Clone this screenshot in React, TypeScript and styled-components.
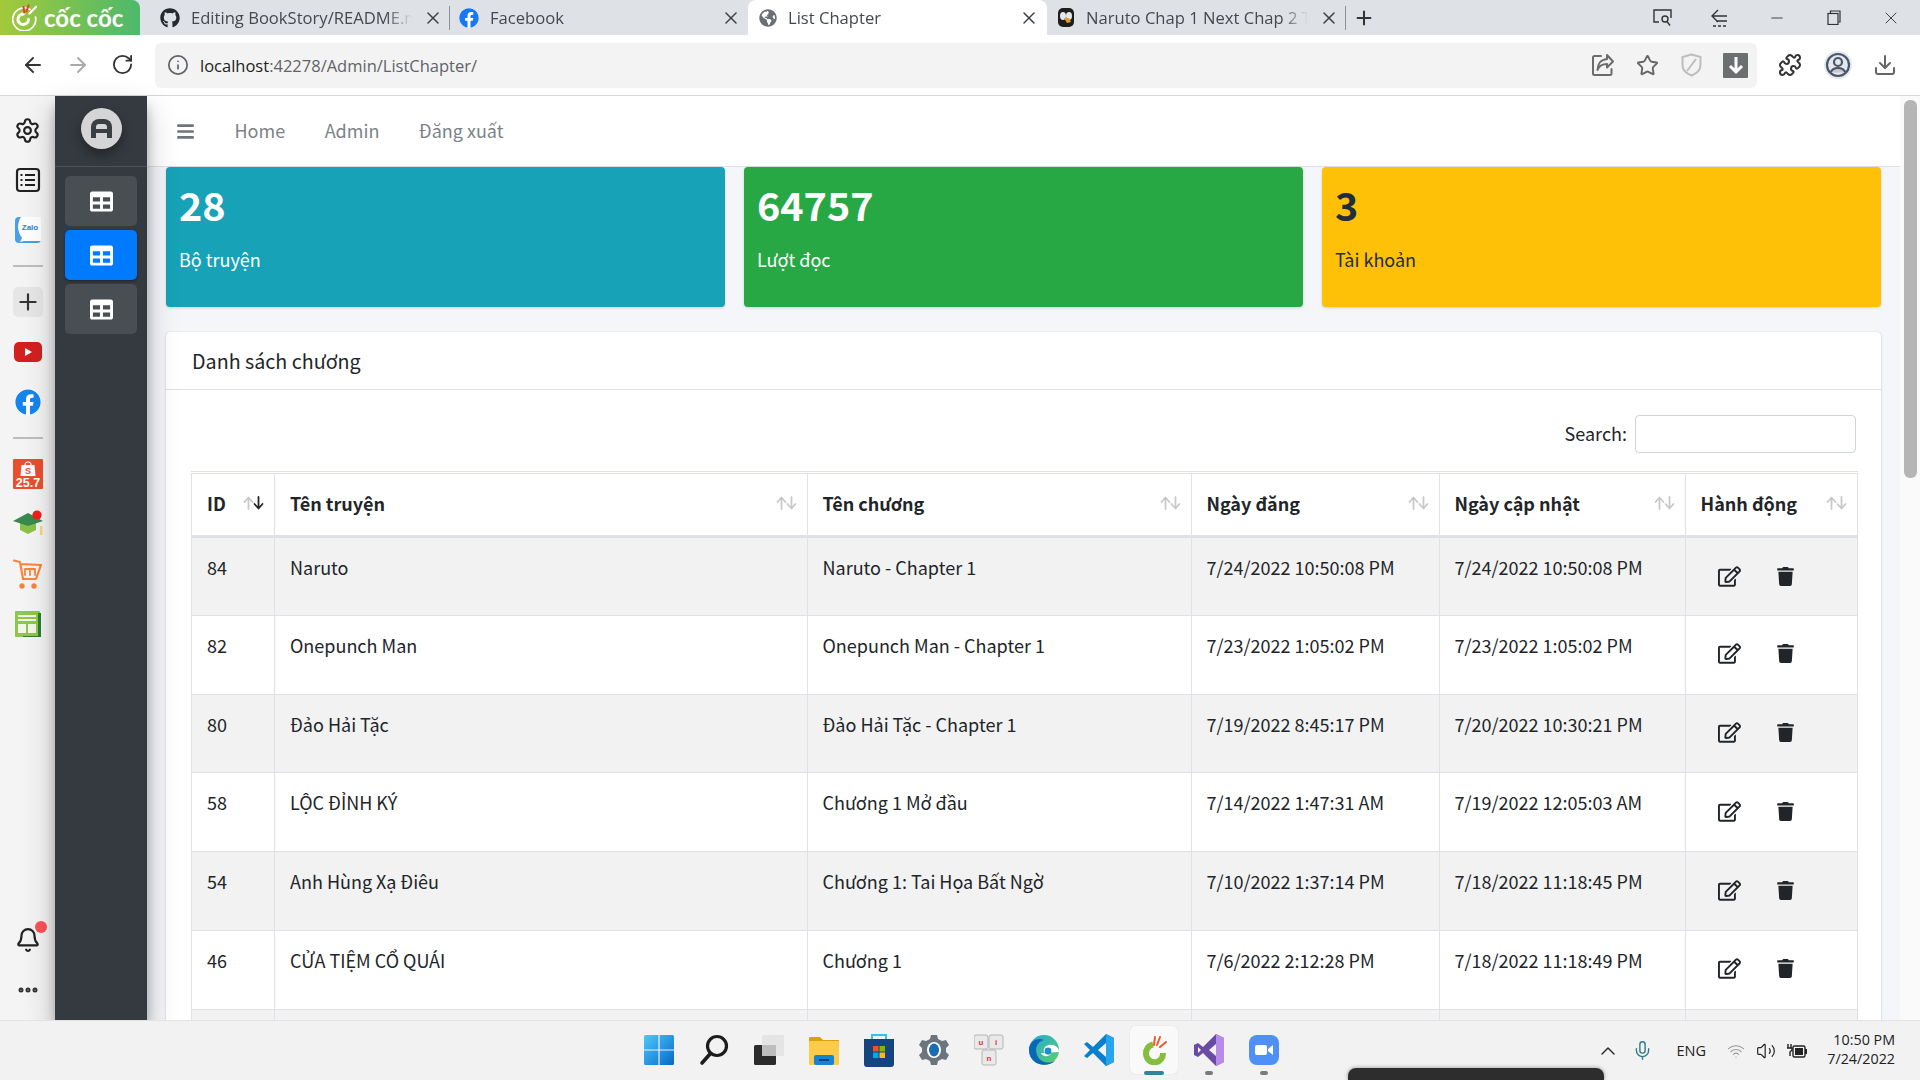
import React from "react";
import styled, { createGlobalStyle } from "styled-components";
import { FaBars, FaFacebook, FaGithub, FaGlobeAmericas, FaRegEdit, FaTable, FaTrash } from "react-icons/fa";
import { ArrowLeft, ArrowRight, Bell, ChevronUp, Download, Info, Mic, Minus, MoreHorizontal, Plus, Puzzle, RotateCw, Settings, Star, Volume2, Wifi, X } from "lucide-react";

const FONT = `"Noto Sans CJK SC", "Noto Sans", sans-serif`;
const CHROME_FONT = `"Open Sans", "Noto Sans", sans-serif`;

const GlobalStyle = createGlobalStyle`
  html, body { margin: 0; padding: 0; height: 100%; overflow: hidden; }
  body { font-family: ${FONT}; color: #212529; background: #fff; }
  * { box-sizing: border-box; }
`;

const rows = [
  { id: 84, story: "Naruto", chapter: "Naruto - Chapter 1", created: "7/24/2022 10:50:08 PM", updated: "7/24/2022 10:50:08 PM" },
  { id: 82, story: "Onepunch Man", chapter: "Onepunch Man - Chapter 1", created: "7/23/2022 1:05:02 PM", updated: "7/23/2022 1:05:02 PM" },
  { id: 80, story: "Đảo Hải Tặc", chapter: "Đảo Hải Tặc - Chapter 1", created: "7/19/2022 8:45:17 PM", updated: "7/20/2022 10:30:21 PM" },
  { id: 58, story: "LỘC ĐỈNH KÝ", chapter: "Chương 1 Mở đầu", created: "7/14/2022 1:47:31 AM", updated: "7/19/2022 12:05:03 AM" },
  { id: 54, story: "Anh Hùng Xạ Điêu", chapter: "Chương 1: Tai Họa Bất Ngờ", created: "7/10/2022 1:37:14 PM", updated: "7/18/2022 11:18:45 PM" },
  { id: 46, story: "CỬA TIỆM CỔ QUÁI", chapter: "Chương 1", created: "7/6/2022 2:12:28 PM", updated: "7/18/2022 11:18:49 PM" },
];

const columns = [
  { label: "ID", width: 83, active: true },
  { label: "Tên truyện", width: 532.5 },
  { label: "Tên chương", width: 384 },
  { label: "Ngày đăng", width: 248 },
  { label: "Ngày cập nhật", width: 246 },
  { label: "Hành động", width: 172 },
];

const stats = [
  { value: "28", label: "Bộ truyện", bg: "#17a2b8", fg: "#fff" },
  { value: "64757", label: "Lượt đọc", bg: "#28a745", fg: "#fff" },
  { value: "3", label: "Tài khoản", bg: "#ffc107", fg: "#1f2d3d" },
];

const SortIcon = ({ active }: { active?: boolean }) => (
  <svg width="21" height="14" viewBox="0 0 21 14" fill="none" strokeWidth="1.8" strokeLinecap="round" strokeLinejoin="round">
    <path d="M5.5 13V2M1.5 6l4-4.5 4 4.5" stroke="#c9c9c9" />
    <path d="M15.5 1v11M11.5 8l4 4.5 4-4.5" stroke={active ? "#212529" : "#c9c9c9"} />
  </svg>
);

const CocCocMark = () => (
  <svg width="29" height="27" viewBox="0 0 29 27" fill="none" strokeLinecap="round">
    <path d="M20 5.5A11.5 11.5 0 1 0 25.5 13" stroke="#fff" strokeWidth="1.7" />
    <path d="M13.5 10A5.3 5.3 0 1 0 18.5 15.5" stroke="#fff" strokeWidth="3" />
    <path d="M13.5 3l.8 5.5M18.5 1.5l-2 6" stroke="#ea3f2c" strokeWidth="2" />
    <path d="M26 3l-6.5 6.5" stroke="#fff" strokeWidth="2.2" />
  </svg>
);

const ListGlyph = () => (
  <svg width="26" height="26" viewBox="0 0 26 26" fill="none" stroke="#222" strokeWidth="2">
    <rect x="2" y="2" width="22" height="22" rx="3" strokeWidth="2.2" />
    <path d="M10 8h10M10 13h10M10 18h10" />
    <path d="M5.5 8h2M5.5 13h2M5.5 18h2" />
  </svg>
);

const ZaloGlyph = () => (
  <svg width="28" height="28" viewBox="0 0 28 28">
    <rect x="1" y="1" width="26" height="26" rx="4" fill="#4a9ee6" />
    <path d="M7 1h20v24H10l-4 1 2-4C3 15 3 7 7 1z" fill="#fff" />
    <text x="16" y="14" fontSize="8" fontWeight="700" fill="#2f7fd6" textAnchor="middle" fontFamily="Liberation Sans, sans-serif">Zalo</text>
  </svg>
);

const YoutubeGlyph = () => (
  <svg width="28" height="20" viewBox="0 0 28 20">
    <rect width="28" height="20" rx="5" fill="#d3201f" />
    <path d="M11 6l7 4-7 4z" fill="#fff" />
  </svg>
);

const FacebookGlyph = () => (
  <FacebookWrap>
    <FaFacebook size={26} color="#1485ee" />
  </FacebookWrap>
);

const ShopeeGlyph = () => (
  <svg width="30" height="30" viewBox="0 0 30 30">
    <rect width="30" height="30" rx="1" fill="#ea4f2d" />
    <path d="M8.5 6h13l1 11h-15z" fill="#fff" />
    <path d="M12 6a3 3 0 0 1 6 0" stroke="#fff" fill="none" strokeWidth="1.2" />
    <text x="15" y="15" fontSize="9" fontWeight="700" fill="#ea4f2d" textAnchor="middle" fontFamily="Liberation Sans, sans-serif">S</text>
    <text x="15" y="28" fontSize="12.5" fontWeight="700" fill="#fff" textAnchor="middle" fontFamily="Liberation Sans, sans-serif">25.7</text>
  </svg>
);

const CapGlyph = () => (
  <svg width="30" height="28" viewBox="0 0 30 28">
    <path d="M7 12h16v8l-8 4-8-4z" fill="#8ac249" />
    <path d="M0 11L15 3l15 8-15 5z" fill="#3a8a4e" />
    <rect x="27" y="16" width="2.4" height="9" fill="#f7d77a" />
    <circle cx="24" cy="5" r="4.6" fill="#f01c1c" />
  </svg>
);

const CartGlyph = () => (
  <svg width="30" height="30" viewBox="0 0 30 30" fill="none" stroke="#f9843f" strokeWidth="2.2" strokeLinecap="round" strokeLinejoin="round">
    <path d="M1 1.5l6 1.5 3 17h13l5-14-20-1" />
    <path d="M12 16v-6M17 16v-6M22 16v-6M12 10h10" strokeWidth="1.8" />
    <circle cx="9" cy="27" r="1.6" fill="#f9843f" />
    <circle cx="21" cy="27" r="1.6" fill="#f9843f" />
  </svg>
);

const SheetGlyph = () => (
  <svg width="26" height="26" viewBox="0 0 26 26">
    <rect x="0" y="0" width="25" height="26" rx="1" fill="#8cc84b" />
    <path d="M23 2h3v24H8v-1h15z" fill="#2e7d32" />
    <path d="M3 4h18v2H3zM3 8h18v2H3zM3 13h8v9H3zM13 13h8v9h-8z" fill="#f2f7e9" />
  </svg>
);

const ShareGlyph = () => (
  <svg width="24" height="24" viewBox="0 0 24 24" fill="none" stroke="#6b6b6b" strokeWidth="2" strokeLinejoin="round" strokeLinecap="round">
    <path d="M10 3H3.5A1.5 1.5 0 0 0 2 4.5V20.5A1.5 1.5 0 0 0 3.5 22H19a1.5 1.5 0 0 0 1.5-1.5V16" />
    <path d="M16 2l6 6.5-6 6V11C11 11 8 13 6.5 17 6.5 11 10 6.5 16 6z" />
  </svg>
);

const ShieldGlyph = () => (
  <svg width="21" height="24" viewBox="0 0 21 24" fill="none" stroke="#bdbdbd" strokeWidth="2" strokeLinejoin="round">
    <path d="M10.5 1.5L19.5 4v8c0 5-4 8.5-9 10.5-5-2-9-5.500-9-10.500V4z" />
    <path d="M15 6L6 18" />
  </svg>
);

const ProfileGlyph = () => (
  <svg width="28" height="28" viewBox="0 0 28 28" fill="none">
    <circle cx="14" cy="14" r="14" fill="#e3e7ee" />
    <circle cx="14" cy="14" r="11" stroke="#4a5568" strokeWidth="2.2" />
    <circle cx="14" cy="11" r="4" stroke="#4a5568" strokeWidth="2.2" />
    <path d="M6.5 21.5C8 18 11 17 14 17s6 1 7.5 4.5" fill="#c5cad3" stroke="#4a5568" strokeWidth="2.2" />
  </svg>
);

const WindowsGlyph = () => (
  <svg width="30" height="30" viewBox="0 0 30 30">
    <defs>
      <linearGradient id="winblue" x1="0" y1="0" x2="1" y2="1">
        <stop offset="0" stopColor="#4fc8fb" />
        <stop offset="1" stopColor="#0668c9" />
      </linearGradient>
    </defs>
    <path d="M0 1.5A1.5 1.5 0 0 1 1.5 0H14.4v14.4H0zM15.6 0h12.9A1.5 1.5 0 0 1 30 1.5v12.9H15.6zM0 15.6h14.4V30H1.5A1.5 1.5 0 0 1 0 28.5zM15.6 15.6H30v12.9a1.5 1.5 0 0 1-1.5 1.5H15.6z" fill="url(#winblue)" />
  </svg>
);

const SearchGlyph = () => (
  <svg width="30" height="32" viewBox="0 0 30 32" fill="none" stroke="#1c1c1c" strokeLinecap="round">
    <circle cx="18" cy="12" r="9.5" strokeWidth="3.2" />
    <path d="M11 20L3 29" strokeWidth="3.6" />
  </svg>
);

const TaskViewGlyph = () => (
  <svg width="30" height="30" viewBox="0 0 30 30">
    <rect x="0" y="10" width="22" height="20" rx="1.5" fill="#2b2b2b" />
    <rect x="8" y="0" width="22" height="21" rx="1.5" fill="#e4e4e4" />
    <rect x="8" y="10" width="14" height="11" fill="#bdbdbd" />
  </svg>
);

const FolderGlyph = () => (
  <svg width="30" height="30" viewBox="0 0 30 30">
    <path d="M0 3a1 1 0 0 1 1-1h10l3 3h16v4H0z" fill="#dca104" />
    <rect x="0" y="6" width="30" height="24" rx="1" fill="#fbcb4a" />
    <rect x="5" y="20" width="20" height="10" rx="2" fill="#1583d4" />
    <rect x="10" y="24" width="10" height="2" fill="#083f73" />
  </svg>
);

const StoreGlyph = () => (
  <svg width="30" height="34" viewBox="0 0 30 34">
    <path d="M8 6V2h14v4" stroke="#35c1f1" strokeWidth="2" fill="none" />
    <path d="M0 6h30v25a3 3 0 0 1-3 3H3a3 3 0 0 1-3-3z" fill="#14457f" />
    <rect x="9" y="13" width="5.5" height="5.5" fill="#f25022" />
    <rect x="15.5" y="13" width="5.5" height="5.5" fill="#7fba00" />
    <rect x="9" y="19.5" width="5.5" height="5.5" fill="#00a4ef" />
    <rect x="15.5" y="19.5" width="5.5" height="5.5" fill="#ffb900" />
  </svg>
);

const GearGlyph = () => (
  <svg width="32" height="32" viewBox="0 0 32 32">
    <path d="M13 1h6l1 4 4 2 4-1 3 5-3 3v4l3 3-3 5-4-1-4 2-1 4h-6l-1-4-4-2-4 1-3-5 3-3v-4L1 11l3-5 4 1 4-2z" fill="#6c757d" />
    <ellipse cx="16" cy="16" rx="7" ry="8" fill="#fff" />
    <ellipse cx="16" cy="16" rx="5" ry="6.5" fill="#1a6db3" />
  </svg>
);

const UnikeyGlyph = () => (
  <svg width="30" height="32" viewBox="0 0 30 32" fontFamily="Liberation Sans, sans-serif" fontSize="8" fontWeight="700" textAnchor="middle">
    <rect x="0" y="1" width="14" height="14" rx="2" fill="#e9e9e9" stroke="#b5b5b5" />
    <rect x="15" y="1" width="14" height="14" rx="2" fill="#e9e9e9" stroke="#b5b5b5" />
    <rect x="8" y="16" width="14" height="15" rx="2" fill="#e9e9e9" stroke="#b5b5b5" />
    <text x="7" y="11" fill="#e0363a">u</text>
    <text x="22" y="11" fill="#e0363a">i</text>
    <text x="15" y="27" fill="#e0363a">n</text>
  </svg>
);

const EdgeGlyph = () => (
  <svg width="30" height="32" viewBox="0 0 30 32">
    <defs>
      <linearGradient id="edgegreen" x1="0" y1="0" x2="1" y2="1">
        <stop offset="0" stopColor="#1ea8d8" />
        <stop offset="1" stopColor="#5fd068" />
      </linearGradient>
    </defs>
    <circle cx="15" cy="16" r="15" fill="url(#edgegreen)" />
    <path d="M0 16C0 8 8 3 15 6c-8 2-10 10-6 17 3 5 11 8 18 3-6 6-15 6-21 2-4-3-6-7-6-12z" fill="#0a66b8" />
    <path d="M30 18c0-5-5-8-10-7-4 1-6 4-5 7 1 2 4 3 7 2-3 3-8 3-10-1" fill="#fff" />
    <circle cx="19" cy="17" r="3.4" fill="#1d8fc8" />
  </svg>
);

const VsCodeGlyph = () => (
  <svg width="30" height="32" viewBox="0 0 30 32">
    <path d="M22 0l8 4v24l-8 4L9 19l-6 5-3-2 6-6-6-6 3-2 6 5z" fill="#0a7fcc" />
    <path d="M22 0l8 4v24l-8 4z" fill="#26a4ec" />
    <path d="M22 9l-8 7 8 7z" fill="#f2f2f2" />
  </svg>
);

const CocCocTaskGlyph = () => (
  <svg width="26" height="30" viewBox="0 0 26 30" fill="none" strokeLinecap="round">
    <path d="M12 9.5A8.5 9 0 1 0 22 18" stroke="#86bd3e" strokeWidth="6" strokeLinecap="butt" />
    <path d="M14 2l-1 8M19 2l-3 8M25 7l-6 5" stroke="#ea5a2c" strokeWidth="2" />
  </svg>
);

const VisualStudioGlyph = () => (
  <svg width="30" height="32" viewBox="0 0 30 32">
    <path d="M22 0l8 4v24l-8 4L9 19l-5 4-4-2V11l4-2 5 4z" fill="#6a4aa5" />
    <path d="M22 0l8 4v24l-8 4z" fill="#b78ce8" />
    <path d="M22 10l-7 6 7 6z" fill="#f2f2f2" />
    <path d="M4 13v6l3-3z" fill="#f2f2f2" />
  </svg>
);

const ZoomGlyph = () => (
  <svg width="30" height="30" viewBox="0 0 30 30">
    <rect width="30" height="30" rx="8" fill="#4f90f8" />
    <rect x="6" y="10" width="12" height="10" rx="2" fill="#fff" />
    <path d="M19 14l5-4v10l-5-4z" fill="#fff" />
  </svg>
);

const PenguinGlyph = () => (
  <svg width="18" height="20" viewBox="0 0 18 20">
    <rect x="1" y="0" width="16" height="19" rx="5" fill="#1d1d1d" />
    <ellipse cx="6" cy="8" rx="3" ry="4" fill="#e8e8e8" />
    <ellipse cx="12" cy="8" rx="3" ry="4" fill="#e8e8e8" />
    <path d="M7 10h5l2 4-4 1z" fill="#e39b26" />
  </svg>
);

const CaptureGlyph = () => (
  <svg width="21" height="20" viewBox="0 0 21 20" fill="none" stroke="#333" strokeWidth="1.4">
    <path d="M7 14H2V2h17v8" />
    <circle cx="13" cy="11" r="3" />
    <path d="M15 13.5l3 4" />
  </svg>
);

const BackStackGlyph = () => (
  <svg width="20" height="20" viewBox="0 0 20 20" fill="none" stroke="#333" strokeWidth="1.4">
    <path d="M17 8H3M8 2L2 8l6 6M6 13h11" />
    <path d="M3 18h14" strokeDasharray="3 2" />
  </svg>
);

const RestoreGlyph = () => (
  <svg width="14" height="15" viewBox="0 0 14 15" fill="none" stroke="#333" strokeWidth="1.2">
    <rect x="1" y="3.5" width="10" height="11" />
    <path d="M3.5 3V1h9.5v11H11.5" />
  </svg>
);

const BatteryGlyph = () => (
  <svg width="20" height="16" viewBox="0 0 20 16">
    <rect x="6" y="3" width="12" height="11" rx="1.5" fill="none" stroke="#222" strokeWidth="1.4" />
    <rect x="8" y="5" width="8" height="7" fill="#222" />
    <rect x="18" y="6" width="2" height="5" fill="#222" />
    <path d="M1 1v4M4 1v4M0 5h5v2l-2 2v4" stroke="#222" strokeWidth="1.4" fill="none" />
  </svg>
);

const ArrowDownGlyph = () => (
  <svg width="18" height="20" viewBox="0 0 18 20" fill="none" stroke="#fff" strokeWidth="3">
    <path d="M9 2v15M3 11l6 6 6-6" />
  </svg>
);

const App = () => {
  return (
    <>
      <GlobalStyle />
      <Screen>
        <TabStrip>
          <Brand>
            <CocCocMark />
            <BrandName>cốc cốc</BrandName>
          </Brand>
          <Tab $width={310} $pad={20}>
            <FaGithub size={20} color="#24292f" />
            <TabTitle $width={221}>Editing BookStory/README.md</TabTitle>
            <TabClose><X size={20} strokeWidth={1.8} /></TabClose>
            <TabSep />
          </Tab>
          <Tab $width={298} $pad={9}>
            <FacebookGlyphSmall><FaFacebook size={20} color="#1877f2" /></FacebookGlyphSmall>
            <TabTitle $width={220}>Facebook</TabTitle>
            <TabClose><X size={20} strokeWidth={1.8} /></TabClose>
          </Tab>
          <Tab $width={299} $pad={11} $active>
            <FaGlobeAmericas size={18} color="#6b6f73" />
            <TabTitle $width={220}>List Chapter</TabTitle>
            <TabClose><X size={20} strokeWidth={1.8} /></TabClose>
          </Tab>
          <Tab $width={299} $pad={10}>
            <PenguinGlyph />
            <TabTitle $width={222}>Naruto Chap 1 Next Chap 2 Tiếng Việt</TabTitle>
            <TabClose><X size={20} strokeWidth={1.8} /></TabClose>
            <TabSep />
          </Tab>
          <NewTab><Plus size={22} strokeWidth={2.2} color="#333" /></NewTab>
          <WindowButtons>
            <WindowButton><CaptureGlyph /></WindowButton>
            <WindowButton><BackStackGlyph /></WindowButton>
            <WindowButton><Minus size={18} strokeWidth={1.2} /></WindowButton>
            <WindowButton><RestoreGlyph /></WindowButton>
            <WindowButton><X size={20} strokeWidth={1.1} /></WindowButton>
          </WindowButtons>
        </TabStrip>

        <Toolbar>
          <NavButtons>
            <ToolButton><ArrowLeft size={24} color="#333" strokeWidth={1.9} /></ToolButton>
            <ToolButton><ArrowRight size={24} color="#aaa" strokeWidth={1.9} /></ToolButton>
            <ToolButton><RotateCw size={23} color="#333" strokeWidth={1.9} /></ToolButton>
          </NavButtons>
          <UrlBar>
            <Info size={22} color="#5f6368" strokeWidth={1.9} />
            <UrlText>localhost<UrlPath>:42278/Admin/ListChapter/</UrlPath></UrlText>
            <UrlActions>
              <ShareGlyph />
              <Star size={23} color="#666" strokeWidth={2} />
              <ShieldGlyph />
              <DownloadBox><ArrowDownGlyph /></DownloadBox>
            </UrlActions>
          </UrlBar>
          <ToolEnd>
            <Puzzle size={24} color="#333" strokeWidth={2} />
            <ProfileGlyph />
            <Download size={24} color="#666" strokeWidth={2} />
          </ToolEnd>
        </Toolbar>

        <Body>
          <BrowserSide>
            <SideSlot><Settings size={27} color="#222" strokeWidth={1.9} /></SideSlot>
            <SideSlot><ListGlyph /></SideSlot>
            <SideSlot><ZaloGlyph /></SideSlot>
            <SideRule />
            <SideSlot><AddTile><Plus size={26} color="#333" strokeWidth={2} /></AddTile></SideSlot>
            <SideSlot><YoutubeGlyph /></SideSlot>
            <SideSlot><FacebookGlyph /></SideSlot>
            <SideRule />
            <SideSlot><ShopeeGlyph /></SideSlot>
            <SideSlot><CapGlyph /></SideSlot>
            <SideSlot><CartGlyph /></SideSlot>
            <SideSlot><SheetGlyph /></SideSlot>
            <SideBottom>
              <SideSlot>
                <BellWrap>
                  <Bell size={26} color="#222" strokeWidth={2} />
                  <RedDot />
                </BellWrap>
              </SideSlot>
              <SideSlot><MoreHorizontal size={24} color="#333" strokeWidth={3} /></SideSlot>
            </SideBottom>
          </BrowserSide>

          <AdminSide>
            <AdminBrand><Avatar><AvatarMark /></Avatar></AdminBrand>
            <AdminMenu>
              <AdminItem><FaTable size={23} /></AdminItem>
              <AdminItem $active><FaTable size={23} /></AdminItem>
              <AdminItem><FaTable size={23} /></AdminItem>
            </AdminMenu>
          </AdminSide>

          <Main>
            <Navbar>
              <FaBars size={19} color="#6c757d" />
              <NavLinks>
                <NavLink>Home</NavLink>
                <NavLink>Admin</NavLink>
                <NavLink>Đăng xuất</NavLink>
              </NavLinks>
            </Navbar>
            <Content>
              <StatGrid>
                {stats.map((s) => (
                  <StatCard key={s.label} $bg={s.bg} $fg={s.fg}>
                    <StatValue>{s.value}</StatValue>
                    <StatLabel>{s.label}</StatLabel>
                  </StatCard>
                ))}
              </StatGrid>
              <TableCard>
                <TableCardHeader>Danh sách chương</TableCardHeader>
                <TableCardBody>
                  <SearchRow>
                    <SearchLabel>Search:</SearchLabel>
                    <SearchInput />
                  </SearchRow>
                  <DataTable>
                    <colgroup>
                      {columns.map((c) => (
                        <col key={c.label} width={c.width} />
                      ))}
                    </colgroup>
                    <thead>
                      <tr>
                        {columns.map((c) => (
                          <HeadCell key={c.label}>
                            <HeadInner>
                              <span>{c.label}</span>
                              <SortIcon active={c.active} />
                            </HeadInner>
                          </HeadCell>
                        ))}
                      </tr>
                    </thead>
                    <tbody>
                      {rows.map((r) => (
                        <Row key={r.id}>
                          <Cell>{r.id}</Cell>
                          <Cell>{r.story}</Cell>
                          <Cell>{r.chapter}</Cell>
                          <Cell>{r.created}</Cell>
                          <Cell>{r.updated}</Cell>
                          <Cell>
                            <Actions>
                              <FaRegEdit size={23} />
                              <FaTrash size={19} />
                            </Actions>
                          </Cell>
                        </Row>
                      ))}
                      <Row>
                        {columns.map((c) => (
                          <Cell key={c.label} />
                        ))}
                      </Row>
                    </tbody>
                  </DataTable>
                </TableCardBody>
              </TableCard>
            </Content>
          </Main>

          <Scrollbar><ScrollThumb /></Scrollbar>
        </Body>

        <Taskbar>
          <TaskIcons>
            <TaskIcon><WindowsGlyph /></TaskIcon>
            <TaskIcon><SearchGlyph /></TaskIcon>
            <TaskIcon><TaskViewGlyph /></TaskIcon>
            <TaskIcon><FolderGlyph /></TaskIcon>
            <TaskIcon><StoreGlyph /></TaskIcon>
            <TaskIcon><GearGlyph /></TaskIcon>
            <TaskIcon><UnikeyGlyph /></TaskIcon>
            <TaskIcon><EdgeGlyph /></TaskIcon>
            <TaskIcon><VsCodeGlyph /></TaskIcon>
            <TaskIcon $active><CocCocTaskGlyph /><TaskMark $wide /></TaskIcon>
            <TaskIcon><VisualStudioGlyph /><TaskMark /></TaskIcon>
            <TaskIcon><ZoomGlyph /><TaskMark /></TaskIcon>
          </TaskIcons>
          <Tray>
            <TrayChevron><ChevronUp size={24} color="#222" strokeWidth={1.4} /></TrayChevron>
            <Mic size={21} color="#2d7d8a" strokeWidth={1.6} />
            <TrayText>ENG</TrayText>
            <TrayGroup>
              <Wifi size={18} color="#9a9a9a" strokeWidth={1.6} />
              <Volume2 size={20} color="#222" strokeWidth={1.4} />
              <BatteryGlyph />
            </TrayGroup>
            <Clock>
              <span>10:50 PM</span>
              <span>7/24/2022</span>
            </Clock>
          </Tray>
          <PeekBar />
        </Taskbar>
      </Screen>
    </>
  );
};

const Screen = styled.div`
  width: 1920px;
  height: 1080px;
  display: flex;
  flex-direction: column;
  overflow: hidden;
`;

const TabStrip = styled.div`
  height: 35px;
  flex: none;
  display: flex;
  background: #dee1e6;
  font-family: ${CHROME_FONT};
`;

const Brand = styled.div`
  width: 140px;
  display: flex;
  align-items: center;
  gap: 5px;
  padding-left: 10px;
  background: linear-gradient(90deg, #a4c93a, #4cb96c);
  border-top-right-radius: 8px;
`;

const BrandName = styled.span`
  color: #fff;
  font: 700 24px/1 "Lato", sans-serif;
`;

const Tab = styled.div<{ $width: number; $pad: number; $active?: boolean }>`
  position: relative;
  width: ${(p) => p.$width}px;
  display: flex;
  align-items: center;
  gap: 11px;
  padding-left: ${(p) => p.$pad}px;
  background: ${(p) => (p.$active ? "#fff" : "transparent")};
  border-radius: 8px 8px 0 0;
  color: #45494e;
  font-size: 16.6px;
`;

const TabTitle = styled.span<{ $width: number }>`
  width: ${(p) => p.$width}px;
  white-space: nowrap;
  overflow: hidden;
  -webkit-mask-image: linear-gradient(90deg, #000 88%, transparent);
  mask-image: linear-gradient(90deg, #000 88%, transparent);
`;

const TabClose = styled.span`
  display: flex;
  color: #3c4043;
`;

const TabSep = styled.span`
  position: absolute;
  right: 0;
  top: 6px;
  height: 24px;
  width: 1px;
  background: #8f9398;
`;

const FacebookGlyphSmall = styled.span`
  display: flex;
  background: #fff;
  border-radius: 50%;
`;

const NewTab = styled.div`
  width: 36px;
  display: flex;
  align-items: center;
  justify-content: center;
`;

const WindowButtons = styled.div`
  margin-left: auto;
  display: flex;
  padding-right: 1px;
`;

const WindowButton = styled.div`
  width: 57px;
  display: flex;
  align-items: center;
  justify-content: center;
  color: #333;
`;

const Toolbar = styled.div`
  height: 61px;
  flex: none;
  display: flex;
  align-items: center;
  background: #fff;
  border-bottom: 1px solid #d6d6d6;
`;

const NavButtons = styled.div`
  width: 155px;
  display: flex;
  padding-left: 11px;
`;

const ToolButton = styled.div`
  width: 44.5px;
  display: flex;
  justify-content: center;
`;

const UrlBar = styled.div`
  width: 1602px;
  height: 45px;
  display: flex;
  align-items: center;
  padding: 0 9px 0 12px;
  background: #f3f3f3;
  border-radius: 6px;
`;

const UrlText = styled.span`
  margin-left: 11px;
  font: 16.5px ${CHROME_FONT};
  color: #222;
`;

const UrlPath = styled.span`
  color: #5f6368;
`;

const UrlActions = styled.div`
  margin-left: auto;
  display: flex;
  align-items: center;
  gap: 21.5px;
`;

const DownloadBox = styled.div`
  width: 25px;
  height: 25px;
  display: flex;
  align-items: center;
  justify-content: center;
  background: #6b6f70;
  border-radius: 1px;
`;

const ToolEnd = styled.div`
  flex: 1;
  display: flex;
  align-items: center;
  justify-content: space-between;
  padding: 0 23px 0 21px;
`;

const Body = styled.div`
  flex: 1;
  min-height: 0;
  display: flex;
`;

const BrowserSide = styled.div`
  width: 55px;
  flex: none;
  display: flex;
  flex-direction: column;
  align-items: center;
  padding: 9px 0 5px;
  background: #f4f4f4;
`;

const SideSlot = styled.div`
  height: 50px;
  flex: none;
  display: flex;
  align-items: center;
  justify-content: center;
`;

const SideRule = styled.div`
  width: 30px;
  height: 2px;
  margin: 10px 0;
  flex: none;
  background: #bdbdbd;
`;

const SideBottom = styled.div`
  margin-top: auto;
  display: flex;
  flex-direction: column;
`;

const AddTile = styled.div`
  width: 30px;
  height: 30px;
  display: flex;
  align-items: center;
  justify-content: center;
  background: #e6e6e6;
  border-radius: 5px;
`;

const FacebookWrap = styled.span`
  display: flex;
  background: #fff;
  border-radius: 50%;
`;

const BellWrap = styled.div`
  position: relative;
  display: flex;
`;

const RedDot = styled.span`
  position: absolute;
  top: -6px;
  right: -6px;
  width: 12px;
  height: 12px;
  border-radius: 50%;
  background: #ff5156;
`;

const AdminSide = styled.aside`
  position: relative;
  z-index: 2;
  width: 92px;
  flex: none;
  background: #343a40;
  box-shadow: 0 14px 28px rgba(0, 0, 0, 0.25), 0 10px 10px rgba(0, 0, 0, 0.22);
`;

const AdminBrand = styled.div`
  height: 71px;
  display: flex;
  align-items: center;
  justify-content: center;
  padding-bottom: 6px;
  border-bottom: 1px solid #4b545c;
`;

const Avatar = styled.div`
  width: 41px;
  height: 41px;
  display: flex;
  align-items: center;
  justify-content: center;
  border-radius: 50%;
  background: #d5d5d5;
  box-shadow: 0 6px 12px rgba(0, 0, 0, 0.35);
`;

/* blocky letter of the site logo, made from a box with a bar through it */
const AvatarMark = styled.span`
  position: relative;
  width: 21px;
  height: 19px;
  border: 5px solid #3a3f44;
  border-bottom: 0;
  border-radius: 8px 8px 0 0;
  &::after {
    content: "";
    position: absolute;
    left: 0;
    right: 0;
    top: 5px;
    height: 4px;
    background: #3a3f44;
  }
`;

const AdminMenu = styled.nav`
  display: flex;
  flex-direction: column;
  gap: 4px;
  padding: 9px 10px 0;
`;

const AdminItem = styled.div<{ $active?: boolean }>`
  height: 50px;
  display: flex;
  align-items: center;
  justify-content: center;
  border-radius: 5px;
  color: #fff;
  background: ${(p) => (p.$active ? "#007bff" : "#494e53")};
  box-shadow: ${(p) => (p.$active ? "0 1px 3px rgba(0,0,0,.4)" : "none")};
`;

const Main = styled.main`
  flex: 1;
  min-width: 0;
  background: #f4f6f9;
  overflow: hidden;
`;

const Navbar = styled.div`
  height: 71px;
  display: flex;
  align-items: center;
  padding-left: 29px;
  background: #fff;
  border-bottom: 1px solid #dee2e6;
`;

const NavLinks = styled.div`
  display: flex;
  gap: 39.5px;
  margin-left: 39.5px;
`;

const NavLink = styled.span`
  position: relative;
  top: -1px;
  font-size: 18px;
  color: #7c8288;
`;

const Content = styled.div`
  padding: 0 19px;
`;

const StatGrid = styled.div`
  display: grid;
  grid-template-columns: repeat(3, 1fr);
  gap: 19px;
  margin-bottom: 25px;
`;

const StatCard = styled.div<{ $bg: string; $fg: string }>`
  height: 140px;
  padding: 11px 13px;
  background: ${(p) => p.$bg};
  color: ${(p) => p.$fg};
  border-radius: 4px;
  box-shadow: 0 1px 3px rgba(0, 0, 0, 0.15);
`;

const StatValue = styled.div`
  font-size: 39.5px;
  font-weight: 700;
  line-height: 52px;
`;

const StatLabel = styled.div`
  margin-top: 15px;
  font-size: 18px;
  line-height: 29px;
`;

const TableCard = styled.section`
  background: #fff;
  border-radius: 4px;
  box-shadow: 0 0 1px rgba(0, 0, 0, 0.2), 0 1px 3px rgba(0, 0, 0, 0.15);
`;

const TableCardHeader = styled.div`
  height: 58px;
  display: flex;
  align-items: center;
  padding-left: 26px;
  font-size: 19.7px;
  border-bottom: 1px solid #dfdfdf;
`;

const TableCardBody = styled.div`
  padding: 25px 24px 0 25px;
`;

const SearchRow = styled.div`
  display: flex;
  align-items: center;
  justify-content: flex-end;
  gap: 8px;
  margin: 0 1px 18px 0;
`;

const SearchLabel = styled.label`
  position: relative;
  top: -1px;
  font-size: 18px;
`;

const SearchInput = styled.input`
  width: 221px;
  height: 38px;
  border: 1px solid #ced4da;
  border-radius: 4px;
`;

const DataTable = styled.table`
  width: 1665.5px;
  table-layout: fixed;
  border-collapse: collapse;
  border-top: 3px double #dee2e6;
`;

const HeadCell = styled.th`
  height: 64px;
  padding: 0 10px 3px 15px;
  text-align: left;
  font-size: 18px;
  font-weight: 700;
  border: 1px solid #dee2e6;
  border-bottom: 3px solid #dee2e6;
`;

const HeadInner = styled.div`
  display: flex;
  align-items: center;
  justify-content: space-between;
`;

const Row = styled.tr`
  height: 78.8px;
  &:nth-child(odd) {
    background: #f2f2f2;
  }
`;

const Cell = styled.td`
  padding: 15px 15px;
  vertical-align: top;
  font-size: 18px;
  line-height: 29.4px;
  border: 1px solid #dee2e6;
`;

const Actions = styled.div`
  display: flex;
  align-items: center;
  gap: 35px;
  height: 40px;
  margin-top: 3px;
  padding-left: 17px;
  color: #212529;
`;

const Scrollbar = styled.div`
  width: 20px;
  flex: none;
  padding: 4px 3px 0 4px;
  background: #fafafa;
`;

const ScrollThumb = styled.div`
  height: 378px;
  background: #b5b5b5;
  border-radius: 6px;
`;

const Taskbar = styled.footer`
  position: relative;
  z-index: 3;
  height: 60px;
  flex: none;
  display: flex;
  align-items: center;
  padding-bottom: 2px;
  background: #f2f2f2;
  border-top: 1px solid #e2e2e2;
  font-family: ${CHROME_FONT};
`;

const TaskIcons = styled.div`
  display: flex;
  margin-left: 635px;
`;

const TaskIcon = styled.div<{ $active?: boolean }>`
  position: relative;
  width: 48px;
  height: 48px;
  margin-right: 7px;
  display: flex;
  align-items: center;
  justify-content: center;
  background: ${(p) => (p.$active ? "#f9f9f9" : "transparent")};
  border-radius: 5px;
  box-shadow: ${(p) => (p.$active ? "0 0 1px rgba(0,0,0,.2)" : "none")};
`;

const TaskMark = styled.span<{ $wide?: boolean }>`
  position: absolute;
  bottom: -1px;
  left: 50%;
  width: ${(p) => (p.$wide ? 20 : 8)}px;
  height: 4px;
  transform: translateX(-50%);
  border-radius: 2px;
  background: ${(p) => (p.$wide ? "#2c8598" : "#7a7a7a")};
`;

const Tray = styled.div`
  position: absolute;
  right: 25px;
  top: 0;
  bottom: 0;
  display: flex;
  align-items: center;
  color: #222;
`;

const TrayChevron = styled.span`
  display: flex;
  margin-right: 12px;
`;

const TrayText = styled.span`
  margin: 0 21px 0 23px;
  font-size: 14.5px;
`;

const TrayGroup = styled.div`
  display: flex;
  align-items: center;
  gap: 11px;
`;

const Clock = styled.div`
  width: 88px;
  display: flex;
  flex-direction: column;
  align-items: flex-end;
  padding-bottom: 3px;
  font-size: 14.3px;
  line-height: 19px;
`;

const PeekBar = styled.div`
  position: absolute;
  left: 1348px;
  width: 256px;
  height: 12px;
  bottom: 0;
  background: #2d2d2d;
  border-radius: 8px 8px 0 0;
  box-shadow: 0 0 4px rgba(0, 0, 0, 0.4);
`;

export default App;
